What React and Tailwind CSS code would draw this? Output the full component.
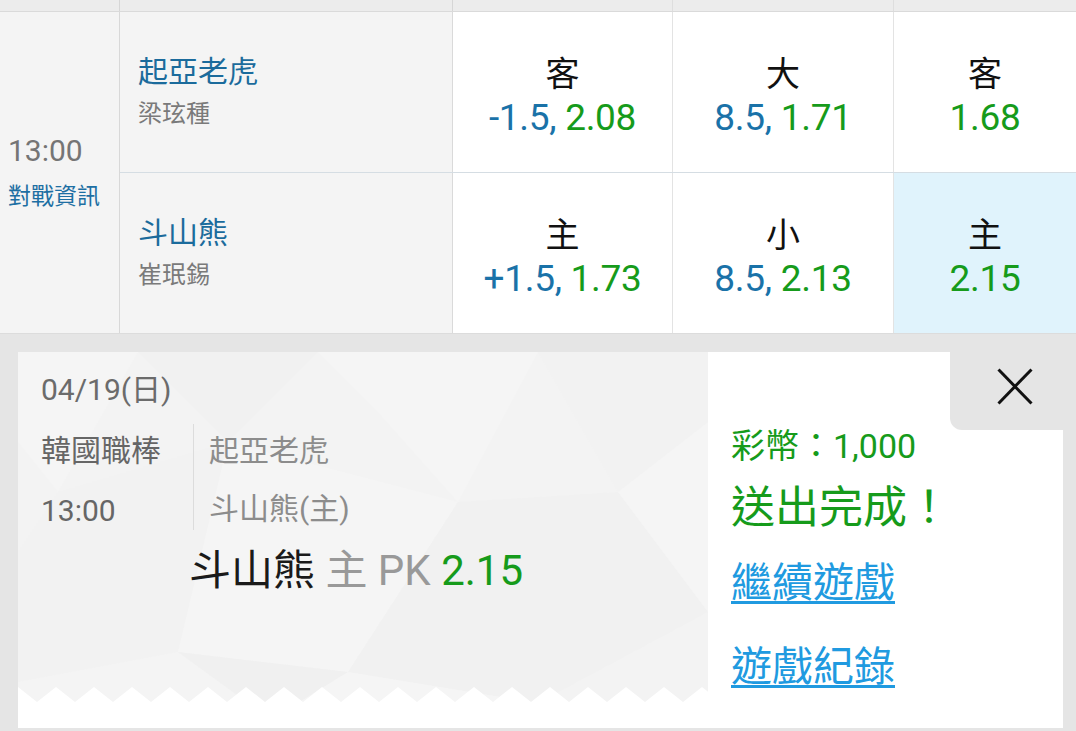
import React from "react";

function TeamCell({ name, pitcher }) {
  return (
    <div className="w-[333px] h-full bg-[#f4f4f4] border-r border-[#dadada] flex flex-col justify-center pl-[18px] pt-[2px]">
      <div className="text-[30px] leading-[42px] text-[#1b6b9c]">{name}</div>
      <div className="text-[24px] leading-[42px] text-[#7a7a7a]">{pitcher}</div>
    </div>
  );
}

function OddCell({ label, a, b, sel, last, w }) {
  return (
    <div
      className={
        (sel ? "bg-[#e0f3fc] " : "bg-white ") +
        (last ? "flex-1 " : "border-r border-[#e3e3e3] ") +
        w +
        " h-full flex flex-col items-center justify-center pt-[8px]"
      }
    >
      <div className="text-[34px] leading-[44px] text-[#111]">{label}</div>
      <div className="text-[37px] leading-[44px] tracking-[-0.3px]">
        {a ? <span className="text-[#1a72a8]">{a} </span> : null}
        <span className="text-[#169b1b]">{b}</span>
      </div>
    </div>
  );
}

function Row({ name, pitcher, odds, border }) {
  return (
    <div className={(border ? "h-[161px] border-b border-[#d5dde3] " : "h-[160px] ") + "flex"}>
      <TeamCell name={name} pitcher={pitcher} />
      <OddCell {...odds[0]} w="w-[220px]" />
      <OddCell {...odds[1]} w="w-[221px]" />
      <OddCell {...odds[2]} w="" last />
    </div>
  );
}

function TicketPattern() {
  return (
    <svg className="absolute inset-0" width="690" height="351" viewBox="0 0 690 351">
      <rect width="690" height="351" fill="#f3f3f3" />
      <polygon points="0,0 120,0 40,140 0,90" fill="#f5f5f5" />
      <polygon points="120,0 300,0 210,90" fill="#f1f1f1" />
      <polygon points="300,0 520,0 440,150 360,60" fill="#f5f5f5" />
      <polygon points="520,0 690,0 690,70 600,140" fill="#f2f2f2" />
      <polygon points="40,140 210,90 160,300 0,330 0,200" fill="#f2f2f2" />
      <polygon points="210,90 440,150 330,320 160,300" fill="#f5f5f5" />
      <polygon points="440,150 600,140 690,260 520,351 330,320" fill="#f1f1f1" />
      <polygon points="600,140 690,70 690,260" fill="#f5f5f5" />
      <polygon points="0,330 160,300 230,351 0,351" fill="#f4f4f4" />
      <polygon points="160,300 330,320 280,351 230,351" fill="#f0f0f0" />
      <polygon points="330,320 520,351 280,351" fill="#f5f5f5" />
    </svg>
  );
}

function Zigzag() {
  const pts = [];
  const period = 38;
  pts.push("0,16");
  for (let x = 0; x <= 690 + period; x += period) {
    pts.push(`${x},0`);
    pts.push(`${x + period / 2},15`);
  }
  pts.push("728,16");
  return (
    <svg className="absolute left-0 bottom-0" width="690" height="16" viewBox="0 0 690 16">
      <polygon points={pts.join(" ")} fill="#ffffff" />
      <rect x="0" y="15" width="690" height="1" fill="#ffffff" />
    </svg>
  );
}

export default function App() {
  return (
    <div className="w-[1076px] h-[731px] overflow-hidden bg-[#e5e5e5] flex flex-col font-[Roboto,'Noto_Sans_CJK_TC',sans-serif]">
      {/* top strip */}
      <div className="h-[12px] shrink-0 flex bg-[#ececec] border-b border-[#dadada]">
        <div className="w-[120px] border-r border-[#d6d6d6]" />
        <div className="w-[333px] border-r border-[#d6d6d6]" />
        <div className="w-[220px] border-r border-[#dedede]" />
        <div className="w-[221px] border-r border-[#dedede]" />
        <div className="flex-1" />
      </div>

      {/* table */}
      <div className="h-[322px] shrink-0 flex border-b border-[#dcdcdc]">
        <div className="w-[120px] bg-[#f4f4f4] border-r border-[#d8d8d8] flex flex-col justify-center pl-[8px] pt-[2px]">
          <div className="text-[30px] leading-[46px] text-[#757575]">13:00</div>
          <div className="text-[23px] leading-[46px] text-[#1d6fa3]">對戰資訊</div>
        </div>
        <div className="flex-1 flex flex-col">
          <Row
            border
            name="起亞老虎"
            pitcher="梁玹種"
            odds={[
              { label: "客", a: "-1.5,", b: "2.08" },
              { label: "大", a: "8.5,", b: "1.71" },
              { label: "客", b: "1.68" },
            ]}
          />
          <Row
            name="斗山熊"
            pitcher="崔珉錫"
            odds={[
              { label: "主", a: "+1.5,", b: "1.73" },
              { label: "小", a: "8.5,", b: "2.13" },
              { label: "主", b: "2.15", sel: true },
            ]}
          />
        </div>
      </div>

      {/* confirmation area */}
      <div className="flex-1 pt-[18px] pl-[18px] pr-[13px] pb-[3px] flex">
        <div className="flex-1 flex">
          {/* ticket */}
          <div className="w-[690px] flex flex-col bg-white">
            <div className="relative h-[351px] overflow-hidden">
              <TicketPattern />
              <Zigzag />
              <div className="relative pl-[23px] pt-[18px]">
                <div className="text-[30px] leading-[40px] text-[#6b6b6b]">04/19(日)</div>
                <div className="flex mt-[11px]">
                  <div className="w-[152px] text-[30px] text-[#666]">
                    <div className="leading-[60px]">韓國職棒</div>
                    <div className="leading-[60px]">13:00</div>
                  </div>
                  <div className="mt-[3px] h-[106px] border-l border-[#dcdcdc]" />
                  <div className="pl-[15px] pt-[1px] text-[30px] text-[#8c8c8c]">
                    <div className="leading-[58px]">起亞老虎</div>
                    <div className="leading-[58px]">斗山熊(主)</div>
                  </div>
                </div>
                <div className="mt-[2px] pl-[148px] text-[42px] leading-[56px] whitespace-nowrap">
                  <span className="text-[#1a1a1a]">斗山熊</span>{" "}
                  <span className="text-[#999]">主 PK</span>{" "}
                  <span className="text-[#169b1b]">2.15</span>
                </div>
              </div>
            </div>
            <div className="flex-1 bg-white" />
          </div>

          {/* right panel */}
          <div className="flex-1 bg-white flex flex-col">
            <div className="h-[76px] flex">
              <div className="flex-1" />
              <div className="w-[113px] h-[78px] bg-[#e5e5e5] rounded-bl-[12px] flex justify-end items-start pt-[16px] pr-[30px]">
                <svg width="36" height="37" viewBox="0 0 36 37">
                  <line x1="1.5" y1="1.5" x2="34.5" y2="35.5" stroke="#111" strokeWidth="3" />
                  <line x1="34.5" y1="1.5" x2="1.5" y2="35.5" stroke="#111" strokeWidth="3" />
                </svg>
              </div>
            </div>
            <div className="pl-[23px] flex flex-col items-start">
              <div className="text-[34px] leading-[36px] text-[#169b1b] whitespace-nowrap">彩幣：1,000</div>
              <div className="mt-[16px] text-[44px] leading-[56px] text-[#169b1b] whitespace-nowrap">送出完成！</div>
              <div className="mt-[19px] text-[41px] leading-[56px] text-[#209ae0] underline decoration-[3px] underline-offset-[4px] whitespace-nowrap">繼續遊戲</div>
              <div className="mt-[28px] text-[41px] leading-[56px] text-[#209ae0] underline decoration-[3px] underline-offset-[4px] whitespace-nowrap">遊戲紀錄</div>
            </div>
          </div>
        </div>
      </div>
    </div>
  );
}
